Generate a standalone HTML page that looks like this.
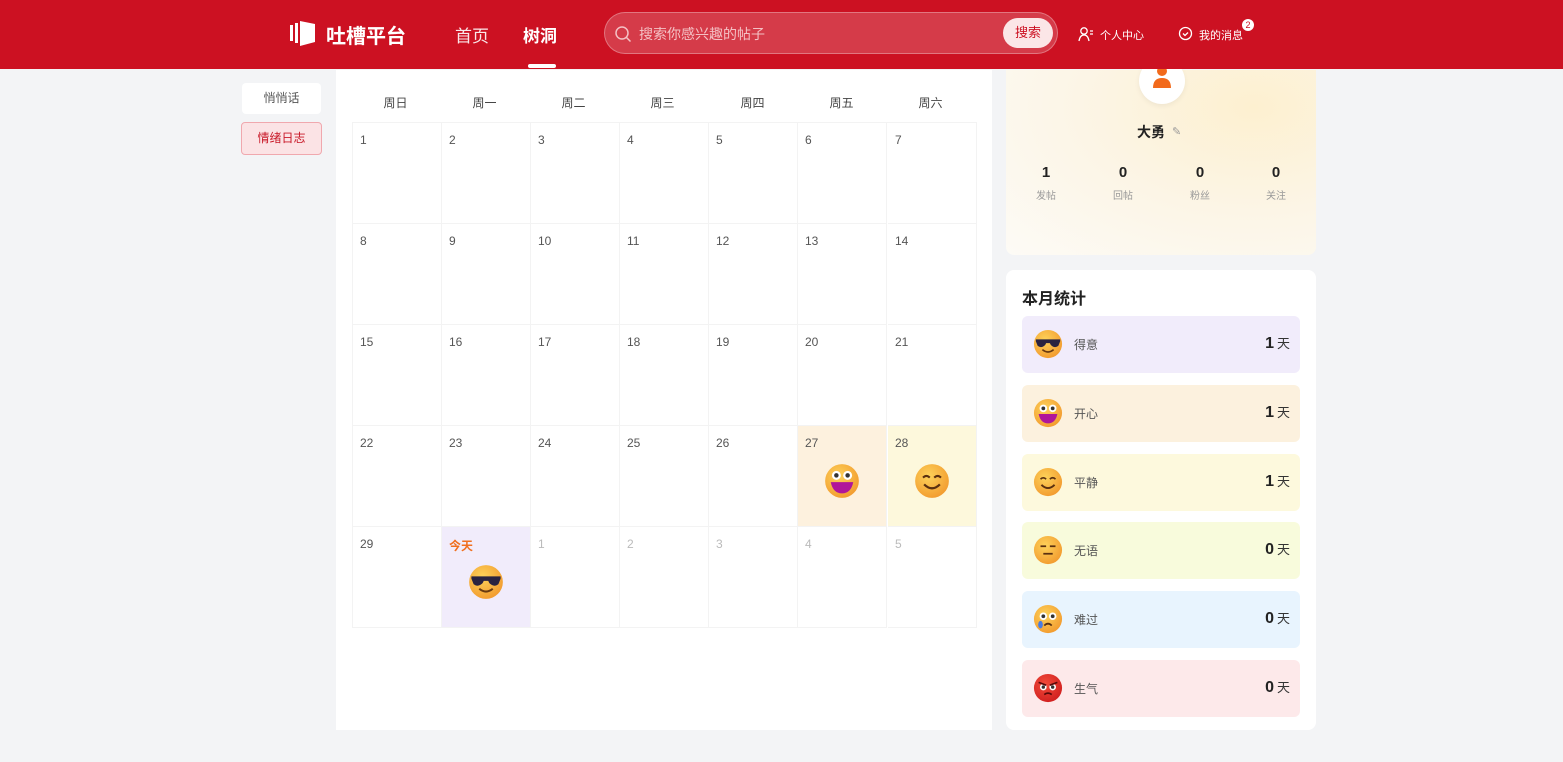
<!DOCTYPE html>
<html><head><meta charset="utf-8">
<style>
*{margin:0;padding:0;box-sizing:border-box}
body{width:1563px;height:762px;background:#f3f4f6;font-family:"Liberation Sans","Noto Sans CJK SC",sans-serif;position:relative;overflow:hidden;color:#333}
.abs{position:absolute}
.hdr{left:0;top:0;width:1563px;height:69px;background:#cc1122;z-index:5}
.z{z-index:6}
.cell{position:absolute;width:89px;height:101px;border-right:1px solid #f3f3f3;border-bottom:1px solid #f3f3f3;font-size:12px;color:#555;padding:10px 0 0 7px}
.cell.g{color:#bbb}
.wk{position:absolute;top:94px;width:89px;text-align:center;font-size:12px;color:#444}
.row{position:absolute;left:1022px;width:278px;height:57px;border-radius:6px}
.row .e{position:absolute;left:11px;top:13px}
.row .l{position:absolute;left:52px;top:20px;font-size:12px;color:#555}
.row .n{position:absolute;right:10px;top:17px;font-size:16px;font-weight:bold;color:#222}
.row .n span{font-size:13px;font-weight:normal;color:#333;margin-left:3px}
</style></head><body>
<svg width="0" height="0" style="position:absolute">
<defs>
<radialGradient id="fy" cx="40%" cy="35%" r="70%"><stop offset="0" stop-color="#fdd25a"/><stop offset="1" stop-color="#f29a2e"/></radialGradient>
<radialGradient id="fr" cx="40%" cy="35%" r="70%"><stop offset="0" stop-color="#f24b3a"/><stop offset="1" stop-color="#d01f1f"/></radialGradient>
<g id="cool"><circle cx="16" cy="16" r="15" fill="url(#fy)"/><path d="M3 11h26v2l-2 5q-4 3-8-1l-1-2h-4l-1 2q-4 4-8 1l-2-5z" fill="#2a2340"/><path d="M10 22q6 5 12 0" stroke="#6a3a10" stroke-width="1.8" fill="none"/></g>
<g id="happy"><circle cx="16" cy="16" r="15" fill="url(#fy)"/><circle cx="11" cy="11" r="4" fill="#fff"/><circle cx="21" cy="11" r="4" fill="#fff"/><circle cx="11" cy="11" r="2" fill="#333"/><circle cx="21" cy="11" r="2" fill="#333"/><path d="M6 17h20q-2 10-10 10t-10-10z" fill="#b0159a"/></g>
<g id="smile"><circle cx="16" cy="16" r="15" fill="url(#fy)"/><path d="M8 13q3-3 6 0M18 13q3-3 6 0" stroke="#5a3010" stroke-width="1.8" fill="none"/><path d="M9 19q7 7 14 0" stroke="#5a3010" stroke-width="2" fill="none"/></g>
<g id="meh"><circle cx="16" cy="16" r="15" fill="url(#fy)"/><path d="M8 12h6M18 12h6M11 20h10" stroke="#5a3010" stroke-width="1.8"/></g>
<g id="sad"><circle cx="16" cy="16" r="15" fill="url(#fy)"/><circle cx="11" cy="13" r="4" fill="#fff"/><circle cx="21" cy="13" r="4" fill="#fff"/><circle cx="11" cy="13" r="2" fill="#333"/><circle cx="21" cy="13" r="2" fill="#333"/><path d="M12 23q4-4 8 0" stroke="#5a3010" stroke-width="1.8" fill="none"/><ellipse cx="8" cy="22" rx="2.5" ry="4" fill="#4a7be0"/></g>
<g id="angry"><circle cx="16" cy="16" r="15" fill="url(#fr)"/><circle cx="11" cy="15" r="3.5" fill="#fff"/><circle cx="21" cy="15" r="3.5" fill="#fff"/><circle cx="11" cy="15" r="1.8" fill="#333"/><circle cx="21" cy="15" r="1.8" fill="#333"/><path d="M6 10l8 3M26 10l-8 3M12 23q4-3 8 0" stroke="#5a0a0a" stroke-width="1.8" fill="none"/></g>
</defs></svg>

<div class="abs hdr"></div>
<svg class="abs z" style="left:289px;top:19px" width="28" height="28" viewBox="0 0 28 28"><rect x="1" y="6" width="3" height="16" fill="#fff"/><rect x="6" y="4" width="3" height="20" fill="#fff"/><path d="M11 2l15 3v18l-15 4z" fill="#fff"/></svg>
<div class="abs z" style="left:326px;top:20px;color:#fff;font-size:20px;font-weight:bold">吐槽平台</div>
<div class="abs z" style="left:455px;top:22px;color:#fff;font-size:17px;opacity:.9">首页</div>
<div class="abs z" style="left:523px;top:22px;color:#fff;font-size:17px;font-weight:bold">树洞</div>
<div class="abs z" style="left:528px;top:64px;width:28px;height:4px;background:#fff;border-radius:2px"></div>
<div class="abs z" style="left:604px;top:12px;width:454px;height:42px;border-radius:21px;background:rgba(255,255,255,.18);border:1px solid rgba(255,255,255,.3)"></div>
<svg class="abs z" style="left:614px;top:25px" width="18" height="18" viewBox="0 0 18 18"><circle cx="8" cy="8" r="6" stroke="#f4c0c4" stroke-width="1.5" fill="none"/><path d="M12.5 12.5l4 4" stroke="#f4c0c4" stroke-width="1.5"/></svg>
<div class="abs z" style="left:639px;top:24px;color:#f4c0c4;font-size:14px">搜索你感兴趣的帖子</div>
<div class="abs z" style="left:1003px;top:18px;width:50px;height:30px;border-radius:15px;background:#fbe6e7;color:#cc1122;font-size:13px;text-align:center;line-height:30px">搜索</div>
<svg class="abs z" style="left:1078px;top:26px" width="16" height="16" viewBox="0 0 16 16"><circle cx="6" cy="5" r="3.2" stroke="#fff" stroke-width="1.3" fill="none"/><path d="M1 15q1-6 5-6t5 6M12 5h3M12 8h3" stroke="#fff" stroke-width="1.3" fill="none"/></svg>
<div class="abs z" style="left:1100px;top:27px;color:#fff;font-size:11px">个人中心</div>
<svg class="abs z" style="left:1178px;top:26px" width="15" height="15" viewBox="0 0 15 15"><circle cx="7.5" cy="7.5" r="6" stroke="#fff" stroke-width="1.3" fill="none"/><path d="M5 7.5l2 2 3-3" stroke="#fff" stroke-width="1.3" fill="none"/></svg>
<div class="abs z" style="left:1199px;top:27px;color:#fff;font-size:11px">我的消息</div>
<div class="abs z" style="left:1242px;top:19px;width:12px;height:12px;border-radius:6px;background:#fff;color:#cc1122;font-size:9px;text-align:center;line-height:12px">2</div>

<div class="abs" style="left:242px;top:83px;width:79px;height:31px;background:#fff;border-radius:4px;font-size:12px;color:#555;text-align:center;line-height:31px">悄悄话</div>
<div class="abs" style="left:241px;top:122px;width:81px;height:33px;background:#fbe3e5;border:1px solid #f0a8ae;border-radius:4px;font-size:12px;color:#c81828;text-align:center;line-height:31px">情绪日志</div>

<div class="abs" style="left:336px;top:70px;width:656px;height:660px;background:#fff"></div>
<div class="abs" style="left:352px;top:122px;width:625px;height:506px;border-top:1px solid #f3f3f3;border-left:1px solid #f3f3f3"></div>
<div class="wk" style="left:351px">周日</div><div class="wk" style="left:440px">周一</div><div class="wk" style="left:529px">周二</div><div class="wk" style="left:618px">周三</div><div class="wk" style="left:708px">周四</div><div class="wk" style="left:797px">周五</div><div class="wk" style="left:886px">周六</div>

<div id="cal"></div>
<script>
var xs=[352,441,530,619,708,797,887],h='';
var d=[[1,2,3,4,5,6,7],[8,9,10,11,12,13,14],[15,16,17,18,19,20,21],[22,23,24,25,26,27,28],[29,'今天',1,2,3,4,5]];
for(var r=0;r<5;r++)for(var c=0;c<7;c++){var bg='#fff',cls='cell',ex='',col='';
if(r==3&&c==5){bg='#fdf1de';ex='<svg style="position:absolute;left:26px;top:37px" width="36" height="36" viewBox="0 0 32 32"><use href="#happy"/></svg>';}
if(r==3&&c==6){bg='#fdf8dc';ex='<svg style="position:absolute;left:26px;top:37px" width="36" height="36" viewBox="0 0 32 32"><use href="#smile"/></svg>';}
if(r==4&&c==1){bg='#f1ecfb';col='color:#f07020;font-weight:bold;';ex='<svg style="position:absolute;left:26px;top:37px" width="36" height="36" viewBox="0 0 32 32"><use href="#cool"/></svg>';}
if(r==4&&c>1)cls+=' g';
h+='<div class="'+cls+'" style="left:'+(xs[c]+1)+'px;top:'+(123+r*101)+'px;background:'+bg+';'+col+'">'+d[r][c]+ex+'</div>';}
document.getElementById('cal').innerHTML=h;
</script>

<div class="abs" style="left:1006px;top:70px;width:310px;height:185px;border-radius:0 0 8px 8px;background:radial-gradient(ellipse at 80% 20%,#fdf0d0 0%,#fcf5e6 50%,#fdfbf6 100%)"></div>
<div class="abs" style="left:1139px;top:58px;width:46px;height:46px;border-radius:23px;background:#fff;box-shadow:0 2px 6px rgba(0,0,0,.06)"></div>
<svg class="abs" style="left:1150px;top:66px" width="24" height="24" viewBox="0 0 24 24"><circle cx="12" cy="5" r="5" fill="#f26a1b"/><path d="M3 22q0-10 9-10t9 10z" fill="#f26a1b"/></svg>
<div class="abs" style="left:1137px;top:122px;font-size:14px;font-weight:bold;color:#222">大勇</div>
<div class="abs" style="left:1172px;top:125px;font-size:11px;color:#999">✎</div>
<div class="abs" style="left:1016px;top:164px;width:60px;text-align:center;font-size:15px;font-weight:bold;color:#222">1</div>
<div class="abs" style="left:1016px;top:187px;width:60px;text-align:center;font-size:10px;color:#999">发帖</div>
<div class="abs" style="left:1093px;top:164px;width:60px;text-align:center;font-size:15px;font-weight:bold;color:#222">0</div>
<div class="abs" style="left:1093px;top:187px;width:60px;text-align:center;font-size:10px;color:#999">回帖</div>
<div class="abs" style="left:1170px;top:164px;width:60px;text-align:center;font-size:15px;font-weight:bold;color:#222">0</div>
<div class="abs" style="left:1170px;top:187px;width:60px;text-align:center;font-size:10px;color:#999">粉丝</div>
<div class="abs" style="left:1246px;top:164px;width:60px;text-align:center;font-size:15px;font-weight:bold;color:#222">0</div>
<div class="abs" style="left:1246px;top:187px;width:60px;text-align:center;font-size:10px;color:#999">关注</div>

<div class="abs" style="left:1006px;top:270px;width:310px;height:460px;background:#fff;border-radius:8px"></div>
<div class="abs" style="left:1022px;top:285px;font-size:16px;font-weight:bold;color:#222">本月统计</div>
<div class="row" style="top:316px;background:#f1ecfb"><svg class="e" width="30" height="30" viewBox="0 0 32 32"><use href="#cool"/></svg><div class="l">得意</div><div class="n">1<span>天</span></div></div>
<div class="row" style="top:385px;background:#fcf1de"><svg class="e" width="30" height="30" viewBox="0 0 32 32"><use href="#happy"/></svg><div class="l">开心</div><div class="n">1<span>天</span></div></div>
<div class="row" style="top:454px;background:#fdf9dd"><svg class="e" width="30" height="30" viewBox="0 0 32 32"><use href="#smile"/></svg><div class="l">平静</div><div class="n">1<span>天</span></div></div>
<div class="row" style="top:522px;background:#f8fbdc"><svg class="e" width="30" height="30" viewBox="0 0 32 32"><use href="#meh"/></svg><div class="l">无语</div><div class="n">0<span>天</span></div></div>
<div class="row" style="top:591px;background:#e8f4fe"><svg class="e" width="30" height="30" viewBox="0 0 32 32"><use href="#sad"/></svg><div class="l">难过</div><div class="n">0<span>天</span></div></div>
<div class="row" style="top:660px;background:#fde9ea"><svg class="e" width="30" height="30" viewBox="0 0 32 32"><use href="#angry"/></svg><div class="l">生气</div><div class="n">0<span>天</span></div></div>
</body></html>
